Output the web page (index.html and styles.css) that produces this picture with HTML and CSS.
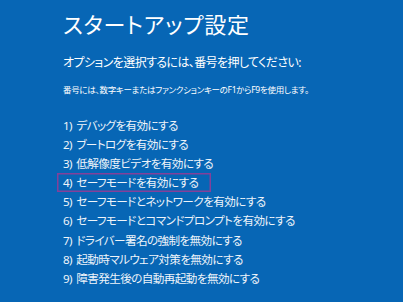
FILE: index.html
```html
<!DOCTYPE html>
<html lang="ja">
<head>
  <meta charset="UTF-8">
  <meta name="viewport" content="width=device-width, initial-scale=1.0">
  <title>スタートアップ設定</title>
  <link rel="stylesheet" href="styles.css">
</head>
<body>
  <div class="screen">
    <h1 class="title">スタートアップ設定</h1>
    <p class="lead">オプションを選択するには、番号を押してください:</p>
    <p class="note">番号には、数字キーまたはファンクションキーのF1からF9を使用します。</p>

    <ul class="options">
      <li>1) デバッグを有効にする</li>
      <li>2) ブートログを有効にする</li>
      <li>3) 低解像度ビデオを有効にする</li>
      <li><span class="selected">4) セーフモードを有効にする</span></li>
      <li>5) セーフモードとネットワークを有効にする</li>
      <li>6) セーフモードとコマンドプロンプトを有効にする</li>
      <li>7) ドライバー署名の強制を無効にする</li>
      <li>8) 起動時マルウェア対策を無効にする</li>
      <li>9) 障害発生後の自動再起動を無効にする</li>
    </ul>
  </div>
</body>
</html>
```

FILE: styles.css
```css
html, body {
  margin: 0;
  padding: 0;
}

body {
  width: 403px;
  height: 302px;
  overflow: hidden;
  background: #0766b5;
  color: #fff;
  font-family: "Noto Sans", "Noto Sans CJK JP", sans-serif;
  font-feature-settings: "palt";
}

.screen {
  padding: 11px 0 0 63px;
}

.title {
  margin: 0;
  font-size: 22px;
  font-weight: 400;
  line-height: 26px;
  letter-spacing: 0.8px;
}

.lead {
  margin: 16px 0 0;
  font-size: 12px;
  line-height: 20px;
  letter-spacing: -0.6px;
}

.note {
  margin: 10px 0 0;
  font-size: 8.5px;
  line-height: 14px;
  letter-spacing: -0.3px;
}

.options {
  list-style: none;
  margin: 19px 0 0;
  padding: 0;
  font-size: 11.6px;
  line-height: 19.1px;
  letter-spacing: -0.6px;
  color: #eef4fa;
  word-spacing: 2px;
}

.options li {
  height: 19.1px;
}

.selected {
  display: inline-block;
  margin-left: -6px;
  padding: 0 13px 0 6px;
  box-shadow: inset 0 0 0 1.5px #84409a;
}
```
